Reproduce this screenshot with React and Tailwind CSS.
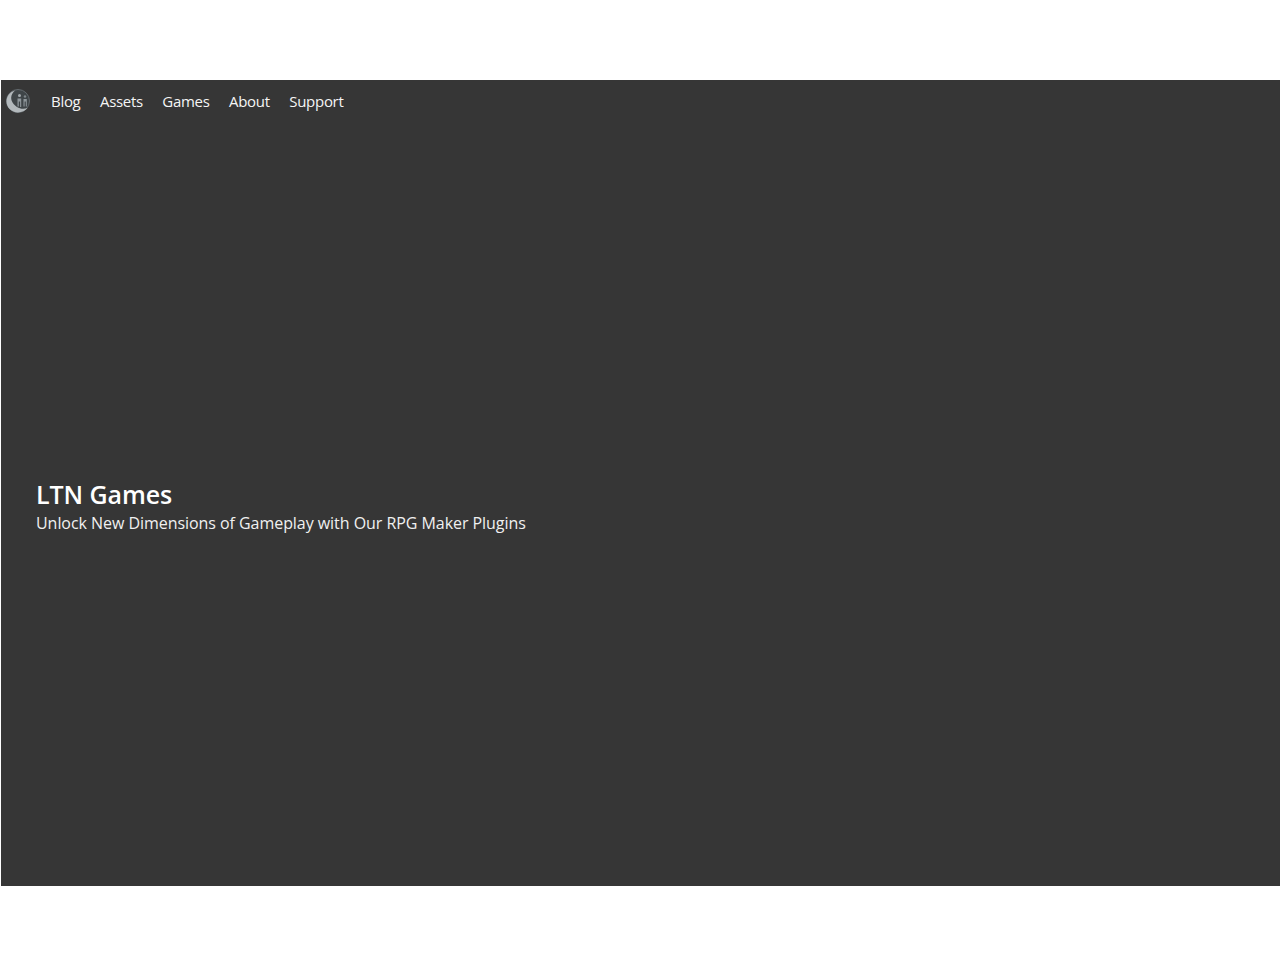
const links = ['Blog', 'Assets', 'Games', 'About', 'Support'];

const Logo = () => (
  <svg width="26" height="26" viewBox="0 0 26 26" className="shrink-0">
    <circle cx="13" cy="13" r="11.5" fill="#3f4548" stroke="#62696d" strokeWidth="1" />
    <path d="M10 2.5C4.8 4 1.5 8.2 1.5 13.5C1.5 19.6 6.8 24.4 12.8 24.4C17 24.4 20.5 22.8 22.5 20C19 21.4 15 21 12 19C8.6 16.8 6 13.4 6.2 9.6C6.4 6.8 7.8 4.4 10 2.5Z" fill="#b3b9bc" />
    <circle cx="14.5" cy="7.5" r="1.5" fill="#a4abaf" />
    <circle cx="20" cy="8.5" r="1.2" fill="#7f878b" />
    <path d="M12.5 10.5H16.2V19H15.1V13.5H13.8V18.5H12.5ZM18.5 11H21.8V18.5H20.8V13.5H19.6V18.5H18.5Z" fill="#8f979b" />
  </svg>
);

export default function App() {
  return (
    <div className="bg-white pt-20 pb-[74px] pl-px font-['Open_Sans',sans-serif]">
      <div className="h-[806px] bg-[#363636] flex flex-col">
        <nav className="h-[42px] flex items-center pl-1 shrink-0">
          <Logo />
          <ul className="flex items-center gap-[19.5px] ml-5">
            {links.map((link) => (
              <li key={link}>
                <a href="#" className="text-[15px] tracking-[-0.3px] text-[#f5f5f5]">{link}</a>
              </li>
            ))}
          </ul>
        </nav>
        <div className="flex-1 flex flex-col justify-center pl-[35px] pt-[6px]">
          <h1 className="text-[25px] leading-8 font-semibold tracking-[-0.07px] text-white">LTN Games</h1>
          <p className="text-[16px] leading-[26px] tracking-[-0.05px] text-[#f0f0f0]">Unlock New Dimensions of Gameplay with Our RPG Maker Plugins</p>
        </div>
      </div>
    </div>
  );
}
